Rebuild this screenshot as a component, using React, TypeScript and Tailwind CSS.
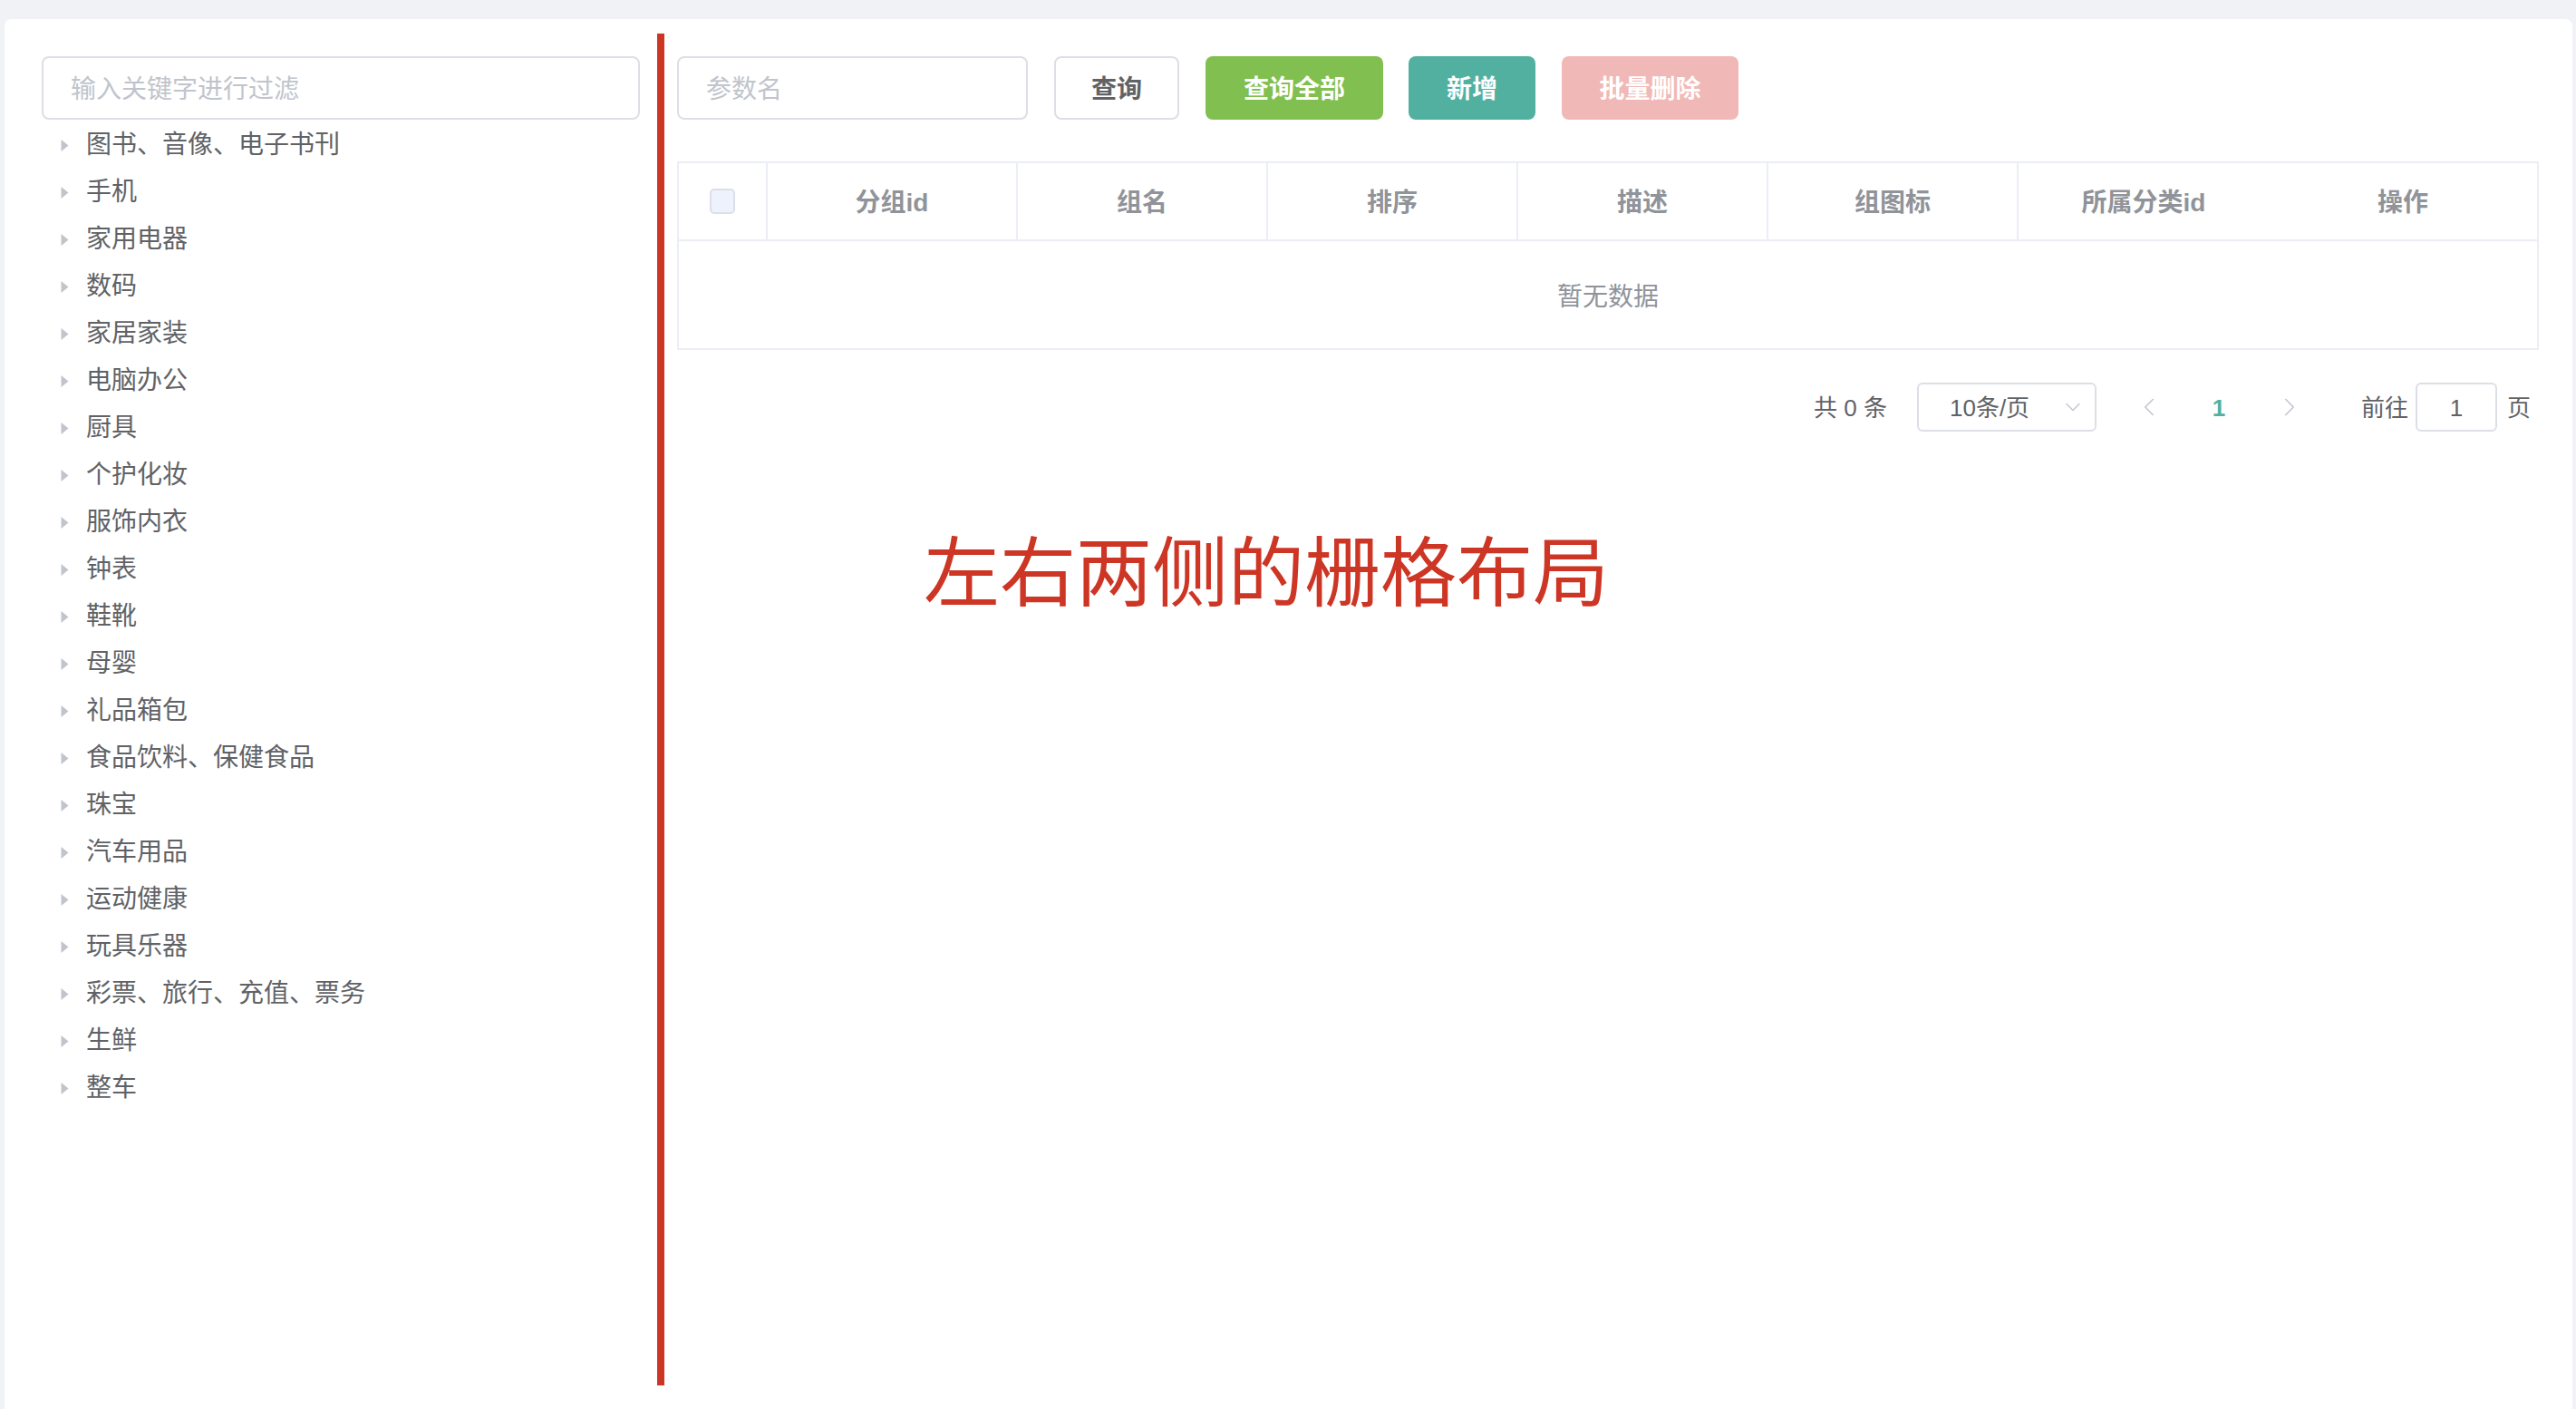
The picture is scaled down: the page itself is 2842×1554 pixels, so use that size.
import { ChevronDown, ChevronLeft, ChevronRight } from "lucide-react";

const categories = [
  "图书、音像、电子书刊",
  "手机",
  "家用电器",
  "数码",
  "家居家装",
  "电脑办公",
  "厨具",
  "个护化妆",
  "服饰内衣",
  "钟表",
  "鞋靴",
  "母婴",
  "礼品箱包",
  "食品饮料、保健食品",
  "珠宝",
  "汽车用品",
  "运动健康",
  "玩具乐器",
  "彩票、旅行、充值、票务",
  "生鲜",
  "整车",
];

const columns = ["分组id", "组名", "排序", "描述", "组图标"];

function CaretRight() {
  return (
    <svg width="9" height="13" viewBox="0 0 9 13" className="shrink-0">
      <path d="M0.5 0 L8.5 6.5 L0.5 13 Z" fill="#c0c4cc" />
    </svg>
  );
}

export default function App() {
  return (
    <div
      className="relative h-[1554px] overflow-hidden bg-[#f0f2f5] pt-[21px] pl-[5px] pr-[4px]"
      style={{ fontFamily: '"Liberation Sans", "Noto Sans CJK SC", sans-serif' }}
    >
      <div className="h-full rounded-t-[8px] bg-white pt-[16px]">
        <div className="flex items-start">
          {/* left: category tree */}
          <div className="ml-[41px] mr-[19px] mt-[25px] w-[660px]">
            <input
              readOnly
              placeholder="输入关键字进行过滤"
              className="h-[70px] w-full rounded-[8px] border-2 border-[#dcdfe6] pl-[30px] pt-[3px] text-[28px] text-[#606266] outline-none placeholder:text-[#c0c4cc]"
            />
            <div className="mt-[2px] flex flex-col">
              {categories.map((c) => (
                <div key={c} className="flex h-[52px] items-center pl-[21px]">
                  <CaretRight />
                  <span className="ml-[19px] text-[28px] leading-none text-[#606266]">{c}</span>
                </div>
              ))}
            </div>
          </div>

          <div className="h-[1491px] w-[8px] shrink-0 bg-[#cd3524]" />

          {/* right: toolbar + table */}
          <div className="ml-[14px] mt-[25px] flex-1 pr-[37px]">
            <div className="flex items-center">
              <input
                readOnly
                placeholder="参数名"
                className="h-[70px] w-[387px] rounded-[8px] border-2 border-[#dcdfe6] pl-[30px] pt-[3px] text-[28px] text-[#606266] outline-none placeholder:text-[#c0c4cc]"
              />
              <button className="ml-[29px] h-[70px] w-[138px] rounded-[8px] border-2 border-[#dcdfe6] bg-white pt-[3px] text-[28px] font-bold text-[#606266]">
                查询
              </button>
              <button className="ml-[29px] h-[70px] w-[196px] rounded-[8px] bg-[#81bf50] pt-[3px] text-[28px] font-bold text-white">
                查询全部
              </button>
              <button className="ml-[28px] h-[70px] w-[140px] rounded-[8px] bg-[#52b0a1] pt-[3px] text-[28px] font-bold text-white">
                新增
              </button>
              <button className="ml-[29px] h-[70px] w-[195px] rounded-[8px] bg-[#f0b8b6] pt-[3px] text-[28px] font-bold text-white">
                批量删除
              </button>
            </div>

            <div className="mt-[46px] border-2 border-[#ebeef5]">
              <div className="flex h-[86px] border-b-2 border-[#ebeef5] text-[28px] font-bold text-[#909399]">
                <div className="flex w-[98px] items-center justify-center border-r-2 border-[#ebeef5]">
                  <span className="h-[28px] w-[28px] rounded-[5px] border-2 border-[#dcdfe6] bg-[#edf2fc]" />
                </div>
                {columns.map((col) => (
                  <div
                    key={col}
                    className="flex w-[276px] items-center justify-center border-r-2 border-[#ebeef5] pt-[3px]"
                  >
                    {col}
                  </div>
                ))}
                <div className="flex w-[276px] items-center justify-center pt-[3px]">所属分类id</div>
                <div className="flex flex-1 items-center justify-center pt-[3px]">操作</div>
              </div>
              <div className="flex h-[118px] items-center justify-center pt-[6px] text-[28px] text-[#909399]">
                暂无数据
              </div>
            </div>

            <div className="mt-[36px] flex h-[54px] items-center justify-end pr-[9px] text-[26px] text-[#606266]">
              <span className="pt-[2px]">共 0 条</span>
              <div className="ml-[33px] flex h-[54px] w-[198px] items-center justify-between rounded-[6px] border-2 border-[#dcdfe6] pl-[34px] pr-[10px]">
                <span className="pt-[2px]">10条/页</span>
                <ChevronDown size={28} strokeWidth={1.1} color="#c0c4cc" />
              </div>
              <div className="ml-[25px] flex w-[66px] items-center justify-center">
                <ChevronLeft size={34} strokeWidth={1.1} color="#c0c4cc" />
              </div>
              <div className="flex w-[88px] items-center justify-center pt-[2px] font-bold text-[#52b0a1]">1</div>
              <div className="flex w-[68px] items-center justify-center">
                <ChevronRight size={34} strokeWidth={1.1} color="#c0c4cc" />
              </div>
              <span className="ml-[45px] pt-[2px]">前往</span>
              <div className="ml-[8px] flex h-[54px] w-[90px] items-center justify-center rounded-[6px] border-2 border-[#dcdfe6] pt-[2px]">
                1
              </div>
              <span className="ml-[11px] pt-[2px]">页</span>
            </div>
          </div>
        </div>
      </div>

      {/* annotation over the page */}
      <div className="absolute left-[1019px] top-[591px] whitespace-nowrap text-[84px] leading-none font-normal text-[#cd3524]">
        左右两侧的栅格布局
      </div>
    </div>
  );
}
